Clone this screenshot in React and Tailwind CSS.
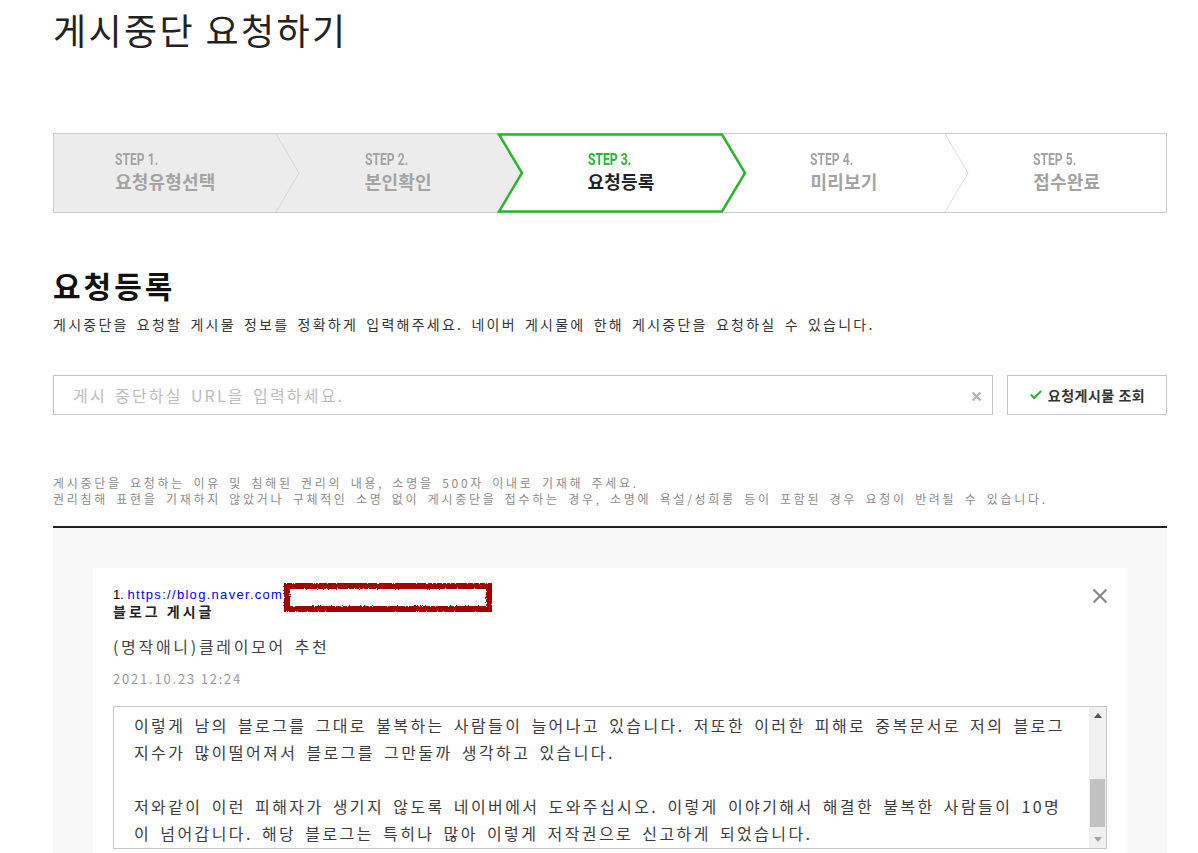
import React from 'react';
import { Check } from 'lucide-react';

const steps = [
  { no: 'STEP 1.', label: '요청유형선택' },
  { no: 'STEP 2.', label: '본인확인' },
  { no: 'STEP 3.', label: '요청등록', active: true },
  { no: 'STEP 4.', label: '미리보기' },
  { no: 'STEP 5.', label: '접수완료' },
];

const bodyLines = [
  '이렇게 남의 블로그를 그대로 불복하는 사람들이 늘어나고 있습니다. 저또한 이러한 피해로 중복문서로 저의 블로그',
  '지수가 많이떨어져서 블로그를 그만둘까 생각하고 있습니다.',
  '',
  '저와같이 이런 피해자가 생기지 않도록 네이버에서 도와주십시오. 이렇게 이야기해서 해결한 불복한 사람들이 10명',
  '이 넘어갑니다. 해당 블로그는 특히나 많아 이렇게 저작권으로 신고하게 되었습니다.',
];

// chevron step bar, shapes drawn behind the labels
const StepBar = () => (
  <div className="relative h-[80px]">
    <svg className="absolute inset-0" width="1114" height="80" viewBox="0 0 1114 80">
      <rect x="0.5" y="0.5" width="1113" height="79" fill="#fff" stroke="#cccccc" />
      <polygon points="1,1 446,1 469,40 446,79 1,79" fill="#ececec" />
      <polyline points="223,1 246,40 223,79" fill="none" stroke="#d6d6d6" strokeWidth="1" />
      <polyline points="892,1 915,40 892,79" fill="none" stroke="#dcdcdc" strokeWidth="1" />
      <polygon points="446,1.5 669,1.5 692,40 669,78.5 446,78.5 469,40" fill="#fff" stroke="#2db42d" strokeWidth="2.5" strokeLinejoin="miter" />
    </svg>
    <div className="relative flex h-full">
      {steps.map((s, i) => (
        <div key={s.no} className={`w-[223px] pt-[17px] ${i === 0 ? 'pl-[62px]' : 'pl-[89px]'}`}>
          <div
            className={`origin-left scale-x-[0.76] whitespace-nowrap font-['Roboto',sans-serif] text-[16px] leading-[20px] font-bold ${s.active ? 'text-[#2db42d]' : 'text-[#a3a3a3]'}`}
          >
            {s.no}
          </div>
          <div className={`text-[18px] leading-[22px] font-bold tracking-[0.2px] ${s.active ? 'text-[#222]' : 'text-[#a3a3a3]'}`}>
            {s.label}
          </div>
        </div>
      ))}
    </div>
  </div>
);

export default function App() {
  return (
    <div className="min-h-screen bg-white font-['Noto_Sans_CJK_KR','Noto_Sans',sans-serif] text-[#222]">
      <div className="ml-[53px] w-[1114px]">
        <h1 className="pt-[7px] text-[36px] leading-[44px] font-normal tracking-[2.4px] text-[#222]">게시중단 요청하기</h1>

        <div className="mt-[82px]">
          <StepBar />
        </div>

        <h2 className="mt-[53px] text-[30px] leading-[38px] font-bold tracking-[3px] text-[#111]">요청등록</h2>
        <p className="mt-[10px] text-[14px] leading-[20px] text-[#333] tracking-[2.25px] [word-spacing:0.2em]">
          게시중단을 요청할 게시물 정보를 정확하게 입력해주세요. 네이버 게시물에 한해 게시중단을 요청하실 수 있습니다.
        </p>

        <div className="mt-[41px] flex gap-[14px]">
          <div className="flex h-[40px] flex-1 items-center border border-[#c4c4c4] pl-[19px] pr-[10px]">
            <span className="flex-1 text-[16px] text-[#bcbcbc] tracking-[2.2px] [word-spacing:0.15em]">게시 중단하실 URL을 입력하세요.</span>
            <svg width="11" height="11" viewBox="0 0 11 11" className="mt-[3px]">
              <path d="M1.5 1.5 L9.5 9.5 M9.5 1.5 L1.5 9.5" stroke="#b4b4b4" strokeWidth="2.4" />
            </svg>
          </div>
          <button className="flex h-[40px] w-[160px] items-center justify-center gap-[5px] border border-[#c4c4c4] bg-white text-[14px] font-bold text-[#333] tracking-[0.5px]">
            <Check size={14} strokeWidth={3.5} className="text-[#2db42d]" />
            요청게시물 조회
          </button>
        </div>

        <div className="mt-[60px] text-[12px] leading-[16px] text-[#8c8c8c] tracking-[2.7px] [word-spacing:0.25em]">
          <p className="h-[16px]">게시중단을 요청하는 이유 및 침해된 권리의 내용, 소명을 500자 이내로 기재해 주세요.</p>
          <p className="h-[16px]">권리침해 표현을 기재하지 않았거나 구체적인 소명 없이 게시중단을 접수하는 경우, 소명에 욕설/성희롱 등이 포함된 경우 요청이 반려될 수 있습니다.</p>
        </div>

        <div className="mt-[19px] border-t-2 border-[#222] bg-[#f8f8f8] px-[40px] pt-[40px]">
          <div className="relative bg-white px-[20px] pt-[11px] pb-[30px]">
            <button className="absolute right-[19px] top-[20px]">
              <svg width="16" height="16" viewBox="0 0 16 16">
                <path d="M1.5 1.5 L14.5 14.5 M14.5 1.5 L1.5 14.5" stroke="#888" strokeWidth="2.2" />
              </svg>
            </button>
            <svg className="absolute left-[189px] top-[13px]" width="212" height="33" viewBox="0 0 212 33">
              <defs>
                <filter id="rough">
                  <feTurbulence type="fractalNoise" baseFrequency="0.9" numOctaves="2" result="n" />
                  <feDisplacementMap in="SourceGraphic" in2="n" scale="3" />
                </filter>
              </defs>
              <rect x="5" y="5" width="202" height="23" fill="#fff" stroke="#a40000" strokeWidth="6" filter="url(#rough)" />
            </svg>

            <div className="text-[13px] leading-[17px] pt-[6px]">
              <span className="font-['Liberation_Sans',sans-serif] text-black">1. </span>
              <span className="font-['Liberation_Sans',sans-serif] tracking-[1.3px] text-[#0000ee]">https://blog.naver.com</span>
            </div>
            <div className="text-[14px] leading-[17px] font-bold text-[#222] tracking-[3px]">블로그 게시글</div>
            <div className="mt-[15px] text-[16px] leading-[22px] text-[#444] tracking-[2.7px] [word-spacing:0.15em]">(명작애니)클레이모어 추천</div>
            <div className="mt-[13px] text-[13px] leading-[18px] text-[#999] tracking-[1.8px]">2021.10.23 12:24</div>

            <div className="mt-[18px] flex h-[143px] border border-[#c8c8c8]">
              <div className="flex-1 overflow-hidden pl-[20px] pt-[5px] text-[16px] leading-[27px] text-[#3c3c3c] tracking-[2.4px] [word-spacing:0.2em]">
                {bodyLines.map((l, i) => (
                  <div key={i} className="h-[27px] whitespace-nowrap">{l}</div>
                ))}
              </div>
              <div className="flex w-[17px] flex-col items-center bg-[#f0f0f0]">
                <div className="flex h-[17px] w-full items-center justify-center">
                  <svg width="8" height="5" viewBox="0 0 8 5"><path d="M0 5 L4 0 L8 5Z" fill="#555" /></svg>
                </div>
                <div className="mt-[55px] h-[48px] w-[15px] bg-[#c1c1c1]" />
                <div className="mt-auto flex h-[17px] w-full items-center justify-center">
                  <svg width="8" height="5" viewBox="0 0 8 5"><path d="M0 0 L8 0 L4 5Z" fill="#a3a3a3" /></svg>
                </div>
              </div>
            </div>
            <div className="h-[200px]" />
          </div>
        </div>
      </div>
    </div>
  );
}
